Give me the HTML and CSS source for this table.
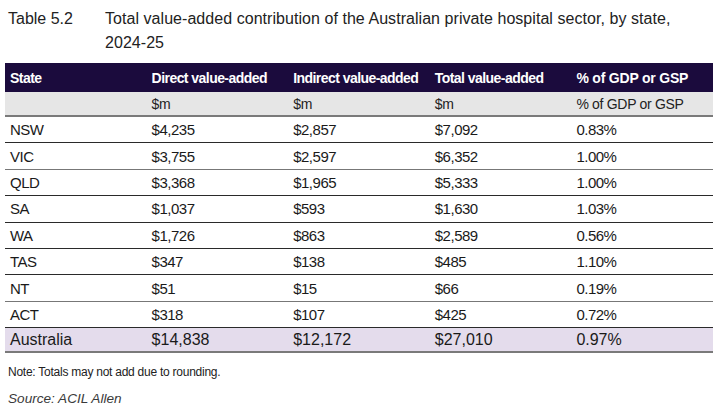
FILE: index.html
```html
<!DOCTYPE html>
<html>
<head>
<meta charset="utf-8">
<link rel="stylesheet" href="styles.css">
</head>
<body>
<div class="page">
  <div class="title">
    <div class="label">Table 5.2</div>
    <div class="caption">Total value-added contribution of the Australian private hospital sector, by state, 2024-25</div>
  </div>
  <table class="data">
    <colgroup><col><col><col><col><col></colgroup>
    <thead>
      <tr class="head"><th>State</th><th>Direct value-added</th><th>Indirect value-added</th><th>Total value-added</th><th class="pct">% of GDP or GSP</th></tr>
      <tr class="units"><td></td><td>$m</td><td>$m</td><td>$m</td><td>% of GDP or GSP</td></tr>
    </thead>
    <tbody>
      <tr><td>NSW</td><td>$4,235</td><td>$2,857</td><td>$7,092</td><td>0.83%</td></tr>
      <tr class="grey"><td>VIC</td><td>$3,755</td><td>$2,597</td><td>$6,352</td><td>1.00%</td></tr>
      <tr><td>QLD</td><td>$3,368</td><td>$1,965</td><td>$5,333</td><td>1.00%</td></tr>
      <tr><td>SA</td><td>$1,037</td><td>$593</td><td>$1,630</td><td>1.03%</td></tr>
      <tr><td>WA</td><td>$1,726</td><td>$863</td><td>$2,589</td><td>0.56%</td></tr>
      <tr><td>TAS</td><td>$347</td><td>$138</td><td>$485</td><td>1.10%</td></tr>
      <tr class="grey"><td>NT</td><td>$51</td><td>$15</td><td>$66</td><td>0.19%</td></tr>
      <tr><td>ACT</td><td>$318</td><td>$107</td><td>$425</td><td>0.72%</td></tr>
      <tr class="total"><td>Australia</td><td>$14,838</td><td>$12,172</td><td>$27,010</td><td>0.97%</td></tr>
    </tbody>
  </table>
  <p class="note">Note: Totals may not add due to rounding.</p>
  <p class="source">Source: ACIL Allen</p>
</div>
</body>
</html>
```

FILE: styles.css
```css
html, body {
  margin: 0;
  padding: 0;
  background: #ffffff;
}
body {
  font-family: "Liberation Sans", Arial, sans-serif;
  color: #1a1a1a;
}
.page {
  width: 720px;
  height: 411px;
  overflow: hidden;
}
.title {
  display: flex;
  padding: 7px 0 0 8px;
  font-size: 16px;
  line-height: 24px;
  color: #222;
}
.title .label {
  width: 97px;
  flex: none;
}
.title .caption {
  width: 590px;
  letter-spacing: 0.05px;
}
.data {
  margin: 8px 0 0 5px;
  width: 708px;
  border-collapse: collapse;
  table-layout: fixed;
  font-size: 15px;
}
.data col {
  width: 20%;
}
.data th, .data td {
  padding: 0 0 0 5px;
  text-align: left;
  white-space: nowrap;
  overflow: hidden;
}
.head th {
  background: #1b0b3d;
  color: #ffffff;
  font-weight: bold;
  letter-spacing: -0.55px;
  height: 29px;
  font-size: 14px;
}
.head th.pct {
  letter-spacing: -0.2px;
}
.units td {
  background: #e6e6e6;
  height: 23px;
  border-bottom: 2px solid #7a7a7a;
  color: #222;
  font-size: 14px;
  letter-spacing: -0.3px;
}
tbody td {
  height: 25.4px;
  border-bottom: 1px solid #2a2a2a;
  letter-spacing: -0.5px;
}
tbody tr.grey td {
  border-bottom: 1px solid #777;
}
tbody tr.total td {
  background: #e4dcec;
  font-size: 16px;
  height: 23px;
  border-bottom: 2px solid #7a7a7a;
  letter-spacing: 0;
}
.note {
  margin: 12px 0 0 8px;
  font-size: 12px;
  color: #222;
  letter-spacing: -0.25px;
}
.source {
  margin: 12px 0 0 8px;
  font-size: 13.6px;
  font-style: italic;
  color: #3a3a3a;
}
```
